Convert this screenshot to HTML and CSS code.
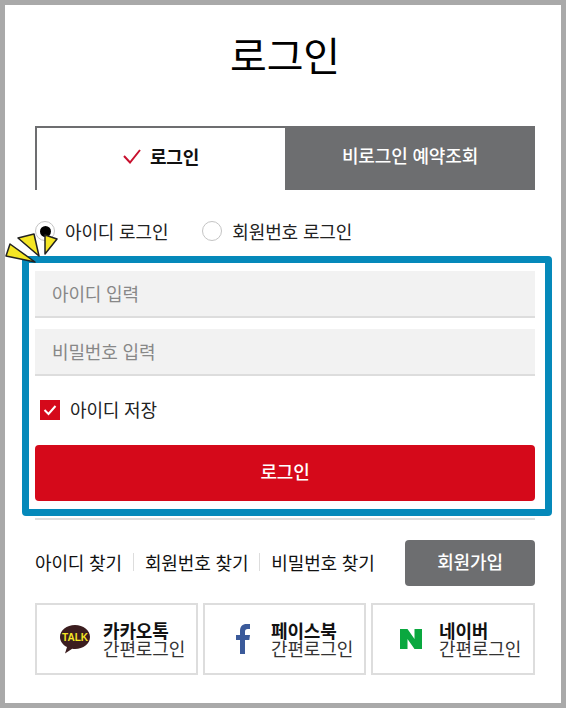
FILE: index.html
```html
<!DOCTYPE html>
<html lang="ko">
<head>
  <meta charset="UTF-8">
  <meta name="viewport" content="width=device-width, initial-scale=1.0">
  <title>로그인</title>
  <link rel="stylesheet" href="styles.css">
</head>
<body>
  <div class="frame">
    <h1>로그인</h1>

    <div class="tabs">
      <a class="tab tab-on">
        <svg class="tab-check" width="18" height="15" viewBox="0 0 18 15"><path d="M1 7l6 6.5L17 1" fill="none" stroke="#c8102e" stroke-width="2"/></svg>
        로그인
      </a>
      <a class="tab tab-off">비로그인 예약조회</a>
    </div>

    <div class="radio-row">
      <label class="radio"><span class="radio-dot radio-dot-on"></span>아이디 로그인</label>
      <label class="radio"><span class="radio-dot"></span>회원번호 로그인</label>
      <svg class="sparkle" width="54" height="32" viewBox="0 0 54 32">
        <g fill="#f5e625" stroke="#222" stroke-width="1.5" stroke-linejoin="round">
          <polygon points="6,11 31,29 2,23"/>
          <polygon points="14,5 30,1 35,23"/>
          <polygon points="41,2 53,6 41,21"/>
        </g>
      </svg>
    </div>

    <form class="login-box">
      <input class="field" type="text" placeholder="아이디 입력">
      <input class="field field-next" type="password" placeholder="비밀번호 입력">
      <label class="save">
        <span class="save-box"><svg width="20" height="20" viewBox="0 0 20 20"><path d="M4.500 10l4 4 7-8" fill="none" stroke="#fff" stroke-width="2"/></svg></span>
        아이디 저장
      </label>
      <button class="login-btn" type="button">로그인</button>
    </form>
    <div class="rule"></div>

    <div class="link-row">
      <div class="links">
        <a>아이디 찾기</a>
        <a>회원번호 찾기</a>
        <a>비밀번호 찾기</a>
      </div>
      <button class="join-btn" type="button">회원가입</button>
    </div>

    <div class="social">
      <a class="social-item">
        <span class="social-icon">
          <svg width="32" height="30" viewBox="0 0 32 30">
            <path d="M16 1C7.700 1 1 6.300 1 12.900c0 4.200 2.800 7.900 7 10l-2 6.600 7.200-4.800c.9.1 1.900.2 2.800.2 8.300 0 15-5.300 15-12S24.300 1 16 1z" fill="#3b1d1f"/>
            <text class="talk" x="16" y="17" text-anchor="middle" textLength="26" lengthAdjust="spacingAndGlyphs">TALK</text>
          </svg>
        </span>
        <span class="social-text"><b>카카오톡</b>간편로그인</span>
      </a>
      <a class="social-item">
        <span class="social-icon">
          <svg width="14" height="30" viewBox="0 0 14 30">
            <path d="M4 30V16H0v-5h4V7c0-4.500 2.500-7 6.500-7H14v5h-2.300C9.800 5 9 6 9 7.800V11h5l-.7 5H9v14z" fill="#3b5a9a"/>
          </svg>
        </span>
        <span class="social-text"><b>페이스북</b>간편로그인</span>
      </a>
      <a class="social-item">
        <span class="social-icon">
          <svg width="22" height="20" viewBox="0 0 22 20">
            <path d="M0 0h7.500l7 10V0H22v20h-7.500l-7-10v10H0z" fill="#0aa83f"/>
          </svg>
        </span>
        <span class="social-text"><b>네이버</b>간편로그인</span>
      </a>
    </div>
  </div>
</body>
</html>
```

FILE: styles.css
```css
* {
  box-sizing: border-box;
}
body {
  margin: 0;
  font-family: "Noto Sans CJK KR", "Noto Sans", sans-serif;
  font-size: 18px;
  letter-spacing: -0.15px;
  color: #222;
}
.frame {
  width: 566px;
  height: 708px;
  border: 5px solid #a9a9a9;
  padding: 0 26px 0 30px;
  background-color: #fff;
  overflow: hidden;
}
h1 {
  margin: 0 0 21px;
  height: 100px;
  line-height: 98px;
  font-size: 40px;
  font-weight: 400;
  text-align: center;
  color: #000;
}
.tabs {
  display: flex;
  height: 64px;
}
.tab {
  flex: 0 0 250px;
  display: flex;
  align-items: center;
  justify-content: center;
  padding-bottom: 6px;
  font-weight: 700;
}
.tab-on {
  border-top: 2px solid #6d6e70;
  border-left: 2px solid #6d6e70;
  color: #111;
}
.tab-check {
  margin-right: 9px;
}
.tab-off {
  background-color: #6d6e70;
  color: #fff;
  font-weight: 500;
}
.radio-row {
  position: relative;
  display: flex;
  gap: 34px;
  height: 40px;
  margin-top: 21px;
  align-items: center;
}
.radio {
  display: flex;
  align-items: center;
  gap: 10px;
  line-height: 36px;
  height: 40px;
}
.radio-dot {
  width: 20px;
  height: 20px;
  border: 1px solid #c4c4c4;
  border-radius: 50%;
  display: flex;
  align-items: center;
  justify-content: center;
}
.radio-dot-on::after {
  content: "";
  width: 11px;
  height: 11px;
  border-radius: 50%;
  background-color: #000;
}
.sparkle {
  position: absolute;
  left: -31px;
  top: 22px;
}
.login-box {
  margin: 5px -17px 0 -13px;
  padding: 8px 10px 8px 6px;
  border: 7px solid #0589ba;
  border-radius: 4px;
}
.field {
  display: block;
  width: 100%;
  height: 47px;
  padding: 0 17px 2px;
  border: 0;
  border-bottom: 2px solid #ddd;
  background-color: #f2f2f2;
  font: inherit;
  letter-spacing: inherit;
}
.field::placeholder {
  color: #888;
}
.field-next {
  margin-top: 11px;
}
.save {
  display: flex;
  align-items: center;
  gap: 10px;
  height: 20px;
  padding-bottom: 2px;
  margin: 24px 0 0 5px;
}
.save-box {
  width: 20px;
  height: 20px;
  flex: none;
  margin-bottom: -2px;
  background-color: #d5091a;
  display: flex;
}
.login-btn {
  display: block;
  width: 100%;
  height: 56px;
  margin-top: 25px;
  padding: 0 0 4px;
  border: 0;
  border-radius: 4px;
  background-color: #d5091a;
  color: #fff;
  font: inherit;
  font-weight: 500;
  letter-spacing: inherit;
}
.rule {
  height: 2px;
  margin-top: 2px;
  background-color: #ddd;
}
.link-row {
  display: flex;
  justify-content: space-between;
  align-items: center;
  height: 46px;
  margin-top: 20px;
}
.links {
  display: flex;
  align-items: center;
  margin-top: -3px;
  padding-top: 1px;
  color: #111;
}
.links a + a {
  margin-left: 11px;
  padding-left: 12px;
  background: linear-gradient(#ddd, #ddd) left center / 1px 18px no-repeat;
}
.join-btn {
  width: 130px;
  height: 46px;
  padding: 0 0 4px;
  border: 0;
  border-radius: 4px;
  background-color: #6d6e70;
  color: #fff;
  font: inherit;
  font-weight: 500;
  letter-spacing: inherit;
}
.social {
  display: grid;
  grid-template-columns: 163px 163px 164px;
  gap: 5px;
  margin-top: 17px;
}
.social-item {
  display: flex;
  align-items: center;
  height: 72px;
  padding-left: 9px;
  border: 2px solid #ddd;
}
.social-icon {
  width: 57px;
  display: flex;
  justify-content: center;
}
.social-text {
  display: flex;
  flex-direction: column;
  line-height: 18px;
  color: #333;
}
.social-text b {
  color: #111;
}
.talk {
  font-family: "Liberation Sans", sans-serif;
  font-size: 10px;
  font-weight: 700;
  fill: #f5e625;
  letter-spacing: 0;
}
```
